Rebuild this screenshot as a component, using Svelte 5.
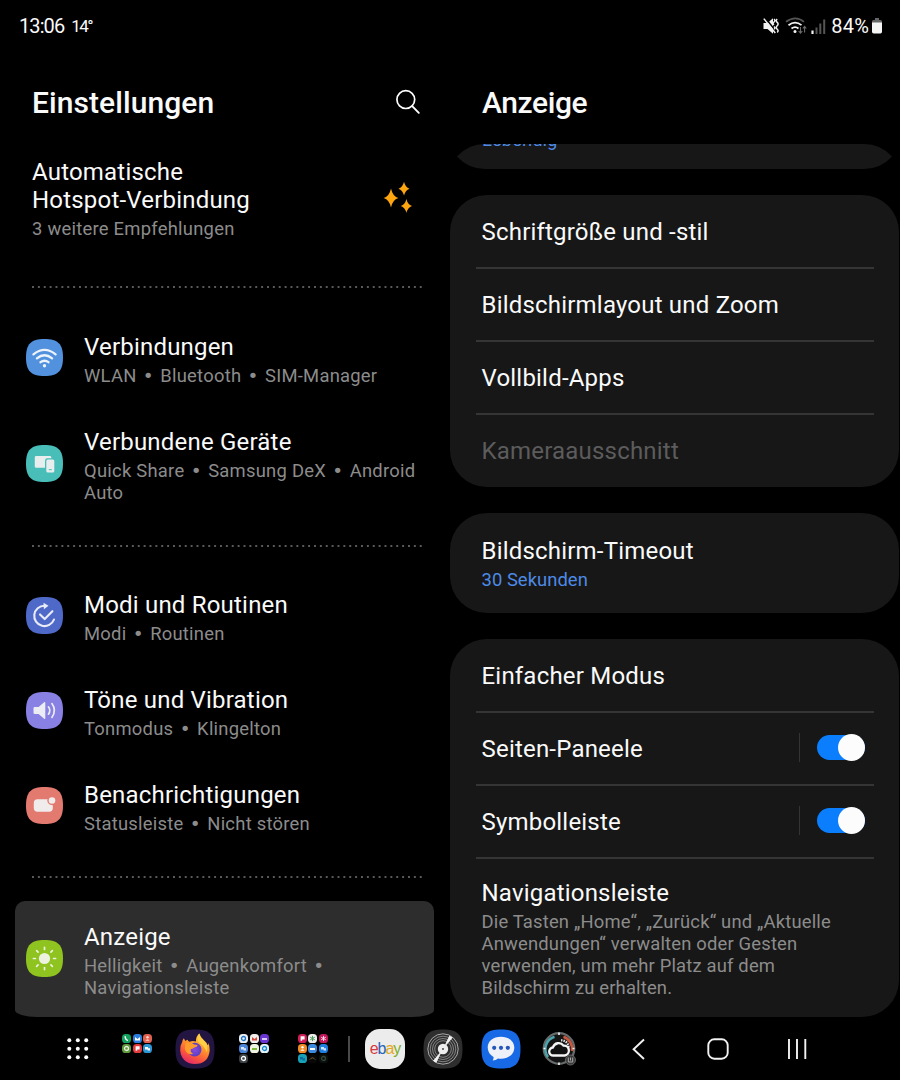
<script lang="ts">
  type Icon = "wifi" | "devices" | "modes" | "sound" | "notify" | "display";
  type Item = { title: string; sub: string; icon: Icon; color: string; selected?: boolean };
  type Row = { title: string; sub?: string; value?: string; toggle?: boolean; disabled?: boolean };

  const groups: Item[][] = [
    [
      { title: "Verbindungen", sub: "WLAN • Bluetooth • SIM-Manager", icon: "wifi", color: "#5191de" },
      { title: "Verbundene Geräte", sub: "Quick Share • Samsung DeX • Android Auto", icon: "devices", color: "#49bdb8" }
    ],
    [
      { title: "Modi und Routinen", sub: "Modi • Routinen", icon: "modes", color: "#4e69c8" },
      { title: "Töne und Vibration", sub: "Tonmodus • Klingelton", icon: "sound", color: "#8880e2" },
      { title: "Benachrichtigungen", sub: "Statusleiste • Nicht stören", icon: "notify", color: "#e27a70" }
    ],
    [
      { title: "Anzeige", sub: "Helligkeit • Augenkomfort • Navigationsleiste", icon: "display", color: "#8fc31f", selected: true }
    ]
  ];

  const cards: Row[][] = [
    [
      { title: "Schriftgröße und -stil" },
      { title: "Bildschirmlayout und Zoom" },
      { title: "Vollbild-Apps" },
      { title: "Kameraausschnitt", disabled: true }
    ],
    [{ title: "Bildschirm-Timeout", value: "30 Sekunden" }],
    [
      { title: "Einfacher Modus" },
      { title: "Seiten-Paneele", toggle: true },
      { title: "Symbolleiste", toggle: true },
      {
        title: "Navigationsleiste",
        sub: "Die Tasten „Home“, „Zurück“ und „Aktuelle Anwendungen“ verwalten oder Gesten verwenden, um mehr Platz auf dem Bildschirm zu erhalten."
      }
    ]
  ];

  let panels = $state<Record<string, boolean>>({ "Seiten-Paneele": true, Symbolleiste: true });

  // mini app icons inside the taskbar folders: background, glyph colour, glyph kind
  const folderA = [
    ["#12a05c", "#fff", "phone"], ["#2b7de0", "#fff", "mail"], ["#e0604f", "#fbd9cf", "person"],
    ["#5f9a3c", "#e8efe0", "ring"], ["#e33b3b", "#fff", "flag"], ["#2d96d4", "#fff", "chat"]
  ];
  const folderB = [
    ["#e9eef2", "#1d74c4", "ring"], ["#f3eeee", "#d6463a", "mail"], ["#6a35d2", "#d9caff", "bars"],
    ["#4b86d8", "#dce8fa", "chat"], ["#eef3e3", "#7fb83b", "bars"], ["#e3f2fb", "#1789cf", "ring"],
    ["#3c4146", "#fff", "ring"]
  ];
  const folderC = [
    ["#d01c57", "#fff", "flag"], ["#eeeeee", "#4a9a5a", "flower"], ["#c2185b", "#ffd7e6", "flower"],
    ["#f08a24", "#fff", "person"], ["#3d8be0", "#fff", "bars"], ["#1f7fe0", "#cfe6ff", "chat"],
    ["#17a2b8", "#0c6c9c", "chat"], ["#080808", "#7c5b32", "arc"], ["#0a0f0c", "#33473c", "ring"]
  ];
</script>

{#snippet folder(apps: string[][])}
  <div class="folder">
    {#each apps as [bg, fg, kind]}
      <svg viewBox="0 0 9 9" width="9" height="9">
        <rect width="9" height="9" rx="3.6" fill={bg} />
        {#if kind === "phone"}
          <path d="M3.3 2.2q-.5 3.3 2.6 4.4" stroke={fg} stroke-width="1.4" fill="none" />
        {:else if kind === "mail"}
          <path d="M2 3l2.5 2L7 3v3.6H2z" fill={fg} />
        {:else if kind === "person"}
          <circle cx="4.5" cy="3.3" r="1.2" fill={fg} /><path d="M2.3 6.8q2.2-3 4.4 0z" fill={fg} />
        {:else if kind === "flag"}
          <path d="M2.6 2.3h4v3.2H4.2v1.3H2.6z" fill={fg} />
        {:else if kind === "chat"}
          <path d="M2 3h3v2.4H2zM4.6 4.2H7v2.4H4.6z" fill={fg} />
        {:else if kind === "bars"}
          <path d="M2 4h5v2H2z" fill={fg} />
        {:else if kind === "flower"}
          <path d="M4.5 1.9v5.2M2.2 3.2l4.6 2.6M2.2 5.8l4.6-2.6" stroke={fg} stroke-width="1" />
        {:else if kind === "arc"}
          <path d="M1.8 5.6q2.7-3.6 5.4 0" stroke={fg} fill="none" />
        {:else}
          <circle cx="4.5" cy="4.5" r="2" stroke={fg} stroke-width="1.3" fill="none" />
        {/if}
      </svg>
    {/each}
  </div>
{/snippet}

{#snippet itemIcon(icon: Icon, color: string)}
  <svg class="item-icon" viewBox="0 0 37 37" width="37" height="37">
    <path d="M18.500 0C32 0 37 5 37 18.500S32 37 18.500 37 0 32 0 18.500 5 0 18.500 0z" fill={color} />
    {#if icon === "wifi"}
      <g fill="none" stroke="#eef3fa" stroke-width="2.3" stroke-linecap="round">
        <path d="M7.400 15.300q11.100-8.800 22.200 0" />
        <path d="M10.900 19.300q7.600-6 15.200 0" />
        <path d="M14.500 23.200q4-3 8 0" />
      </g>
      <circle cx="18.500" cy="26.700" r="1.700" fill="#eef3fa" />
    {:else if icon === "devices"}
      <rect x="8.800" y="11" width="16.500" height="11.800" rx="1.400" fill="#e8eeee" />
      <rect x="19" y="13.300" width="10.600" height="15.400" rx="2.400" fill={color} />
      <rect x="20.300" y="14.600" width="8" height="13" rx="1.500" fill="#e8eeee" />
      <path d="M22.800 24.700h3" stroke={color} stroke-width="1" />
    {:else if icon === "modes"}
      <g fill="none" stroke="#e9ecf7" stroke-width="2.100" stroke-linecap="round" stroke-linejoin="round">
        <path d="M18.500 8.700A10.200 10.200 0 1 0 28 22.500" />
        <path d="M14 17.400l4.700 4.700 7.700-7.900" />
      </g>
      <path d="M17.500 5.700l5 3-4.600 3.500z" fill="#e9ecf7" />
    {:else if icon === "sound"}
      <path d="M7.500 16.300q0-1.300 1.300-1.300h3.800l5.500-4.700q1.200-.8 1.200.7v15q0 1.500-1.200.7l-5.500-4.700H8.800q-1.300 0-1.300-1.300z" fill="#ececf5" />
      <g fill="none" stroke="#ececf5" stroke-width="1.700" stroke-linecap="round">
        <path d="M22.400 14.800q2.900 3.700 0 7.400" />
        <path d="M25.900 11.600q5 6.900 0 13.800" />
      </g>
    {:else if icon === "notify"}
      <rect x="7.800" y="12.200" width="19" height="12.600" rx="3.700" fill="#f0eceb" />
      <circle cx="26" cy="13.500" r="4.700" fill={color} />
      <circle cx="26" cy="13.500" r="3.300" fill="#f0eceb" />
    {:else}
      <circle cx="18.500" cy="18.500" r="5.600" fill="#edf2e0" />
      <g stroke="#edf2e0" stroke-width="1.700" stroke-linecap="round">
        {#each [0, 45, 90, 135, 180, 225, 270, 315] as angle}
          <path d="M18.500 7.400v2" transform="rotate({angle} 18.500 18.500)" />
        {/each}
      </g>
    {/if}
  </svg>
{/snippet}

<div class="screen">
  <div class="status">
    <span class="clock">13:06</span>
    <span class="temp">14°</span>
    <svg class="status-icons" viewBox="0 0 64 20" width="64" height="20">
      <path d="M1.500 7h4l5.500-4.800v15.600L5.500 13h-4z" fill="#f2f2f2" />
      <path d="M3 1.600L14 15.600" stroke="#000" stroke-width="1.600" />
      <path d="M1.800 2.600L13.300 17" stroke="#f2f2f2" stroke-width="1.500" />
      <path d="M12 3q1.800 1.400 0 3t0 3M15.200 3q-1.800 1.700 0 3.400t0 3.400 0 3.400 0 3.200M12 10.500q1.600 1.400.2 2.800" stroke="#f2f2f2" stroke-width="1.500" fill="none" />
      <g fill="none" stroke-width="1.700" stroke="#f2f2f2">
        <path d="M24 5.800q9.500-7 18 0" stroke="#555" />
        <path d="M26.500 9.200q6.700-5 13 0" />
        <path d="M29.500 12.500q3.700-2.800 7 0" />
      </g>
      <circle cx="33" cy="15.400" r="1.500" fill="#f2f2f2" />
      <path d="M38.500 11v6m-1.800-2l1.800 2.200 1.800-2.200M42.600 16.500v-6m-1.700 2l1.700-2.200 1.700 2.200" stroke="#6c6c6c" stroke-width="1.100" fill="none" />
      <path d="M49.400 14.500h2.200V18h-2.200z" fill="#f2f2f2" />
      <path d="M53.500 11.500h2V18h-2zM57.300 7.500h2V18h-2zM61.200 3.500h2V18h-2z" fill="#555" />
    </svg>
    <span class="battery-text">84%</span>
    <svg viewBox="0 0 12 18" width="12" height="18">
      <path d="M4 1h4v2H4zM2.300 3h7.400Q11 3 11 4.500V7H1V4.500Q1 3 2.300 3z" fill="#666" />
      <path d="M1 5.500h10v9.300q0 1.700-1.700 1.700H2.700Q1 16.500 1 14.800z" fill="#f5f5f5" />
    </svg>
  </div>

  <main class="panes">
    <section class="left">
      <header>
        <h1>Einstellungen</h1>
        <svg viewBox="0 0 26 26" width="26" height="26" fill="none" stroke="#fff" stroke-width="1.700">
          <circle cx="10.800" cy="10.600" r="8.900" />
          <path d="M17.200 17.200l6.600 6.600" stroke-linecap="round" stroke-width="1.900" />
        </svg>
      </header>

      <div class="tip">
        <div>
          <div class="title">Automatische<br />Hotspot-Verbindung</div>
          <div class="sub">3 weitere Empfehlungen</div>
        </div>
        <svg viewBox="0 0 30 32" width="30" height="32" fill="#fca510">
          <path d="M8 7.500Q9.600 15.200 15.300 17 9.600 18.800 8 26.500 6.400 18.800.7 17 6.400 15.200 8 7.500z" />
          <path d="M21 .8Q22.300 6.300 26.500 7.700 22.300 9.100 21 14.600 19.700 9.100 15.500 7.700 19.700 6.300 21 .8z" />
          <path d="M23.400 18Q24.700 23.500 29 25 24.700 26.500 23.400 32 22.100 26.500 17.800 25 22.100 23.500 23.400 18z" />
        </svg>
      </div>

      {#each groups as group}
        <div class="dots"></div>
        {#each group as item (item.title)}
          <div class="item" class:selected={item.selected}>
            {@render itemIcon(item.icon, item.color)}
            <div>
              <div class="title">{item.title}</div>
              <div class="sub">
                {#each item.sub.split(" ") as word}<span class:bullet={word === "•"}>{word}</span>{" "}{/each}
              </div>
            </div>
          </div>
        {/each}
      {/each}
    </section>

    <section class="right">
      <header><h1>Anzeige</h1></header>
      <div class="scrolled"><div class="sub blue">Lebendig</div></div>

      {#each cards as card}
        <div class="card">
          {#each card as row (row.title)}
            <div class="row" class:tall={row.sub || row.value} class:disabled={row.disabled}>
              <div class="row-text">
                <div class="title">{row.title}</div>
                {#if row.sub}<div class="sub">{row.sub}</div>{/if}
                {#if row.value}<div class="sub blue">{row.value}</div>{/if}
              </div>
              {#if row.toggle}
                <button
                  type="button"
                  class="toggle"
                  class:on={panels[row.title]}
                  aria-label={row.title}
                  onclick={() => (panels[row.title] = !panels[row.title])}
                >
                  <span></span>
                </button>
              {/if}
            </div>
          {/each}
        </div>
      {/each}
    </section>
  </main>

  <footer class="taskbar">
    <div class="slot wide">
      <svg viewBox="0 0 22 22" width="22" height="22" fill="#fff">
        {#each [2.3, 10.800, 19.200] as y}
          {#each [2.3, 10.800, 19.200] as x}
            <circle cx={x} cy={y} r="2" />
          {/each}
        {/each}
      </svg>
    </div>
    <div class="slot wide">{@render folder(folderA)}</div>
    <div class="slot wide">
      <svg viewBox="0 0 40 40" width="40" height="40">
        <defs>
          <linearGradient id="fox" x1=".8" y1="0" x2=".3" y2="1">
            <stop offset="0" stop-color="#ffe14d" />
            <stop offset=".4" stop-color="#ff9a2a" />
            <stop offset=".75" stop-color="#f9533f" />
            <stop offset="1" stop-color="#e3286c" />
          </linearGradient>
          <radialGradient id="globe"><stop offset="0" stop-color="#8a4be0" /><stop offset="1" stop-color="#5a3fc0" /></radialGradient>
        </defs>
        <path d="M20 .5C34.500.5 39.500 5.500 39.500 20S34.500 39.500 20 39.500.5 34.500.5 20 5.500.5 20 .5z" fill="#231542" />
        <path d="M8.800 9.200q1 1.300 1.500 2.900 1.200-1 2.300-1.300.4 1.300 1.900 1.900 3.200-1.300 6.400-.2-.2-4.800 3.400-8 1.100 3.900 4.600 6.800 3 2.300 3.500 4.900.8-.8.7-2.300 2 3.300 1.600 7.300Q33.500 35 19.700 35 6.500 34.300 5.200 21.500q-.2-5.300 2-8.600.2-2 1.600-3.700z" fill="url(#fox)" />
        <circle cx="19.700" cy="20.600" r="6.800" fill="url(#globe)" />
        <path d="M10.500 14.500q5-2.600 8.600 1 1.100.4 3.600.4-.4 2.300-3.400 2.600-1.700 1.700-3.300 1.300-1.300 3.300 2.400 5.300-7.100 1-8.600-5.400z" fill="#ff9d2c" />
        <path d="M24 4.500q1.100 3.900 4.600 6.800 5 4.600 3.200 12.200-2-6-7-9.300-3.800-2.500-.8-9.700z" fill="#ffcf45" />
      </svg>
    </div>
    <div class="slot wide">{@render folder(folderB)}</div>
    <div class="slot wide">{@render folder(folderC)}</div>
    <div class="separator"></div>
    <div class="slot">
      <div class="ebay"><span class="e">e</span><span class="b">b</span><span class="a">a</span><span class="y">y</span></div>
    </div>
    <div class="slot">
      <svg viewBox="0 0 40 40" width="40" height="40">
        <path d="M20 .5C34.500.5 39.500 5.500 39.500 20S34.500 39.500 20 39.500.5 34.500.5 20 5.500.5 20 .5z" fill="#2e2e2e" />
        <g fill="none" stroke="#a8a8a8" stroke-width=".7">
          <circle cx="20" cy="20" r="15.200" stroke="#dcdcdc" /><circle cx="20" cy="20" r="12.800" />
          <circle cx="20" cy="20" r="10.500" /><circle cx="20" cy="20" r="8.300" />
        </g>
        <path d="M20 20l6.300-13.200q1.900.6 3.300 2zM20 20l-9.900 11.800q1.500 1.300 3.200 1.900z" fill="#f1f1f1" />
        <circle cx="20" cy="20" r="5.200" fill="#ededed" />
        <circle cx="20" cy="20" r=".9" fill="#333" />
      </svg>
    </div>
    <div class="slot">
      <svg viewBox="0 0 40 40" width="40" height="40">
        <path d="M20 .5C34.500.5 39.500 5.500 39.500 20S34.500 39.500 20 39.500.5 34.500.5 20 5.500.5 20 .5z" fill="#1869e6" />
        <path d="M20 7.800c8 0 13.300 4.400 13.300 10.800S28 29.700 20 29.700q-1.700 0-3-.3-2 1.700-5.300 2.100 1.200-1.700.8-3.600Q6.700 24.700 6.700 18.600C6.700 12.200 12 7.800 20 7.800z" fill="#eef1f7" />
        <g fill="#2457b8"><circle cx="13.200" cy="18.800" r="2.100" /><circle cx="20" cy="18.800" r="2.100" /><circle cx="26.800" cy="18.800" r="2.100" /></g>
      </svg>
    </div>
    <div class="slot">
      <svg viewBox="0 0 40 40" width="40" height="40">
        <circle cx="20" cy="19.500" r="15.300" fill="#141414" stroke="#676b6b" stroke-width="2.200" />
        <path d="M9 28A13 13 0 0 1 15.500 7.800" stroke="#4aa5ad" stroke-width="2.500" fill="none" />
        <path d="M24.500 7.800A13 13 0 0 1 33 22" stroke="#c8583f" stroke-width="2.700" fill="none" />
        <path d="M20 3.500v2.500M4.500 19.500h2M33.500 19.500h2M20 33.500v2.500" stroke="#f3f3f3" stroke-width="1.600" />
        <path d="M22 11.300a7.200 7.200 0 0 1 7.500 8.500" stroke="#e6e6e6" stroke-width="2.200" stroke-dasharray="1.500 1" fill="none" />
        <path d="M14.500 26.500a4 4 0 0 1-.6-8 6 6 0 0 1 10.600-1.900 5 5 0 0 1 1.300 9.900z" fill="#111" stroke="#f5f5f5" stroke-width="2.300" />
        <circle cx="31.500" cy="31" r="5" fill="#3a3a3a" stroke="#747474" stroke-width=".8" />
        <path d="M29.300 28.500v4.500h4.400v-4.500M31.500 28.500v3" stroke="#a8a8a8" stroke-width="1" fill="none" />
      </svg>
    </div>
    <nav>
      <svg viewBox="0 0 24 24" width="24" height="24"><path d="M17 2.500L6.600 12.200 17 22" /></svg>
      <svg viewBox="0 0 24 24" width="24" height="24"><rect x="2.300" y="2.300" width="19.400" height="19.400" rx="6" /></svg>
      <svg viewBox="0 0 24 24" width="24" height="24"><path d="M4 2v20M12 2v20M20.300 2v20" /></svg>
    </nav>
  </footer>
</div>

<style>
  :global(body) {
    background: #000;
  }

  .screen {
    width: 900px;
    height: 1080px;
    box-sizing: border-box;
    overflow: hidden;
    display: flex;
    flex-direction: column;
    background: #000;
    color: #fafafa;
    font-family: Roboto, "Noto Sans", sans-serif;
  }

  .status {
    display: flex;
    align-items: center;
    height: 52px;
    padding: 0 17px 0 19px;
    font-size: 20px;
  }

  .clock {
    letter-spacing: -0.9px;
  }

  .temp {
    margin-left: 7px;
    font-size: 17px;
    letter-spacing: -1.6px;
  }

  .status-icons {
    margin-left: auto;
  }

  .battery-text {
    margin: 0 2px 0 5px;
    letter-spacing: 0.2px;
  }

  .panes {
    display: grid;
    grid-template-columns: 450px 450px;
    height: 966px;
  }

  .left,
  .right {
    min-width: 0;
  }

  header {
    display: flex;
    justify-content: space-between;
    align-items: center;
    height: 92px;
    padding: 5px 29px 0 32px;
    box-sizing: border-box;
  }

  header svg {
    margin-top: 2px;
  }

  h1 {
    margin: 5px 0 0;
    font-size: 30px;
    font-weight: 500;
    line-height: 36px;
    letter-spacing: 0.08px;
  }

  .right h1 {
    letter-spacing: -0.4px;
  }

  .title {
    font-size: 24px;
    line-height: 28px;
    letter-spacing: 0.2px;
  }

  .sub {
    margin-top: 4px;
    font-size: 18.4px;
    line-height: 22px;
    letter-spacing: 0.25px;
    color: #8c8c8c;
  }

  .row .sub {
    letter-spacing: 0.18px;
  }

  .sub.blue {
    color: #4d8ae6;
    letter-spacing: 0.05px;
  }

  .tip {
    display: flex;
    justify-content: space-between;
    align-items: center;
    height: 123px;
    padding: 14px 37px 28px 32px;
    box-sizing: border-box;
  }

  .tip svg {
    margin-bottom: 3px;
  }

  .dots {
    height: 2px;
    margin: 19px 28px 25px 32px;
    background: radial-gradient(circle at 1px 1px, #5a5a5a 0.9px, transparent 1.1px) 0 0 / 5.89px 2px repeat-x;
  }

  .item + .dots {
    margin-top: 20px;
    margin-bottom: 24px;
  }

  .item {
    display: flex;
    align-items: center;
    gap: 21px;
    padding: 20px 20px 21px 26px;
  }

  .item-icon {
    flex: none;
    margin-bottom: 5px;
  }

  .bullet {
    margin: 0 1.5px;
    font-family: "DejaVu Sans", sans-serif;
    line-height: 0;
  }

  .item.selected {
    margin: -1px 16px 0 15px;
    padding: 22px 20px 18px 11px;
    background: #2d2d2d;
    border-radius: 10px 10px 22px 22px / 10px 10px 7px 7px;
  }

  .scrolled {
    width: 435px;
    height: 25px;
    margin: 0 0 26px 7px;
    padding-left: 25px;
    box-sizing: border-box;
    background: #171717;
    clip-path: path("M0 12.500A38 38 0 0 1 28 0H407A38 38 0 0 1 435 12.500A38 38 0 0 1 407 25H28A38 38 0 0 1 0 12.500Z");
  }

  .scrolled .sub {
    margin-top: 0;
    transform: translateY(-15px);
  }

  .card {
    margin: 0 1px 26px 0;
    padding: 0 25px 0 26px;
    border-radius: 37px;
    background: #171717;
  }

  .row {
    display: flex;
    align-items: center;
    height: 73px;
    padding: 1px 9px 0 5.5px;
    box-sizing: border-box;
    border-bottom: 2px solid #353535;
  }

  .row:first-child {
    height: 74px;
  }

  .row:last-child {
    height: 72px;
    padding-bottom: 1px;
    border-bottom: 0;
  }

  .row.tall {
    height: auto;
    padding: 20px 9px 18px 5.5px;
  }

  .row.tall:first-child {
    padding: 24px 9px 22px 5.5px;
  }

  .row-text {
    flex: 1;
  }

  .disabled {
    color: #5c5c5c;
  }

  .toggle {
    display: flex;
    align-items: center;
    width: 66px;
    height: 29px;
    margin-top: -3px;
    padding: 0 0 0 17px;
    border: 0;
    border-left: 1px solid #343434;
    background: none;
  }

  .toggle span {
    display: flex;
    align-items: center;
    width: 48px;
    height: 25px;
    border-radius: 13px;
    background: #555;
  }

  .toggle span::after {
    content: "";
    width: 27px;
    height: 27px;
    flex: none;
    border-radius: 50%;
    background: #fcfcfc;
  }

  .toggle.on span {
    justify-content: flex-end;
    background: #0b7efd;
  }

  .taskbar {
    display: flex;
    align-items: center;
    height: 62px;
    padding-left: 49px;
  }

  .slot {
    display: flex;
    justify-content: center;
    align-items: center;
    width: 58px;
    height: 40px;
  }

  .slot.wide {
    width: 58.5px;
  }

  .folder {
    display: grid;
    grid-template-columns: repeat(3, 9px);
    grid-auto-rows: 9px;
    gap: 1px 1.5px;
    align-self: start;
    margin: 5px 0 0 1px;
  }

  .separator {
    width: 2px;
    height: 26px;
    margin: 0 6.5px 0 6px;
    background: #4a4a4a;
  }

  .ebay {
    display: flex;
    justify-content: center;
    align-items: center;
    width: 40px;
    height: 40px;
    border-radius: 15px;
    background: #ececec;
    font: 16px/1 "Liberation Sans", Arial, sans-serif;
    letter-spacing: -1px;
  }

  .e { color: #d93840; }
  .b { color: #2562b8; }
  .a { color: #e5a823; }
  .y { color: #7fae28; }

  nav {
    display: flex;
    gap: 55px;
    margin-left: 39px;
  }

  nav svg {
    fill: none;
    stroke: #f2f2f2;
    stroke-width: 1.9;
  }
</style>
